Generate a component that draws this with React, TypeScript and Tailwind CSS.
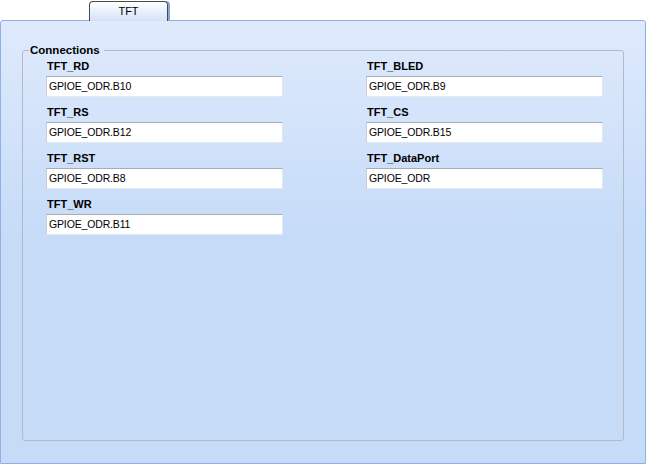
import React from "react";

interface IField {
    label: string;
    value: string;
}

const leftFields: IField[] = [
    { label: "TFT_RD", value: "GPIOE_ODR.B10" },
    { label: "TFT_RS", value: "GPIOE_ODR.B12" },
    { label: "TFT_RST", value: "GPIOE_ODR.B8" },
    { label: "TFT_WR", value: "GPIOE_ODR.B11" },
];

const rightFields: IField[] = [
    { label: "TFT_BLED", value: "GPIOE_ODR.B9" },
    { label: "TFT_CS", value: "GPIOE_ODR.B15" },
    { label: "TFT_DataPort", value: "GPIOE_ODR" },
];

const Field = ({ label, value }: IField) => (
    <div className="flex flex-col">
        <p className="pl-px text-[11px] font-bold leading-[14px] text-black">{label}</p>
        <div className="mt-[3px] flex h-[21px] w-[237px] items-center border border-[#e2e8ee] border-t-[#a7adb4] border-l-[#c9ced4] bg-white pl-[2px] text-[10.5px] tracking-[-0.15px] text-black">
            {value}
        </div>
    </div>
);

const Column = ({ fields }: { fields: IField[] }) => (
    <div className="flex flex-col gap-[8px]">
        {fields.map((f) => (
            <Field key={f.label} {...f} />
        ))}
    </div>
);

export default function App() {
    return (
        <div
            className="flex h-[464px] w-[646px] flex-col bg-white"
            style={{ fontFamily: '"Liberation Sans", Arial, sans-serif' }}
        >
            <div className="relative z-10 -mb-px mt-px ml-[89px] flex h-[20px] w-[79px] items-center justify-center rounded-t-[4px] border border-b-0 border-[#4a4a4a] bg-gradient-to-b from-white to-[#d2e2f8] text-[11px] text-black shadow-[2px_0_0_#86a8dc]">
                TFT
            </div>

            <div className="flex flex-1 flex-col rounded-t-[3px] border border-[#8fb1e3] bg-gradient-to-b from-[#dfeafc] to-[#c5dbf8] to-50% px-[21px] pt-[22px] pb-[22px]">
                <fieldset className="min-w-0 flex-1 rounded-[3px] border border-[#b3bac4] px-[6px]">
                    <legend className="px-px pr-[4px] text-[11.5px] font-bold leading-[14px] text-black">
                        Connections
                    </legend>
                    <div className="grid grid-cols-[237px_237px] gap-x-[83px] pl-[17px] pt-[2px]">
                        <Column fields={leftFields} />
                        <Column fields={rightFields} />
                    </div>
                </fieldset>
            </div>
        </div>
    );
}
